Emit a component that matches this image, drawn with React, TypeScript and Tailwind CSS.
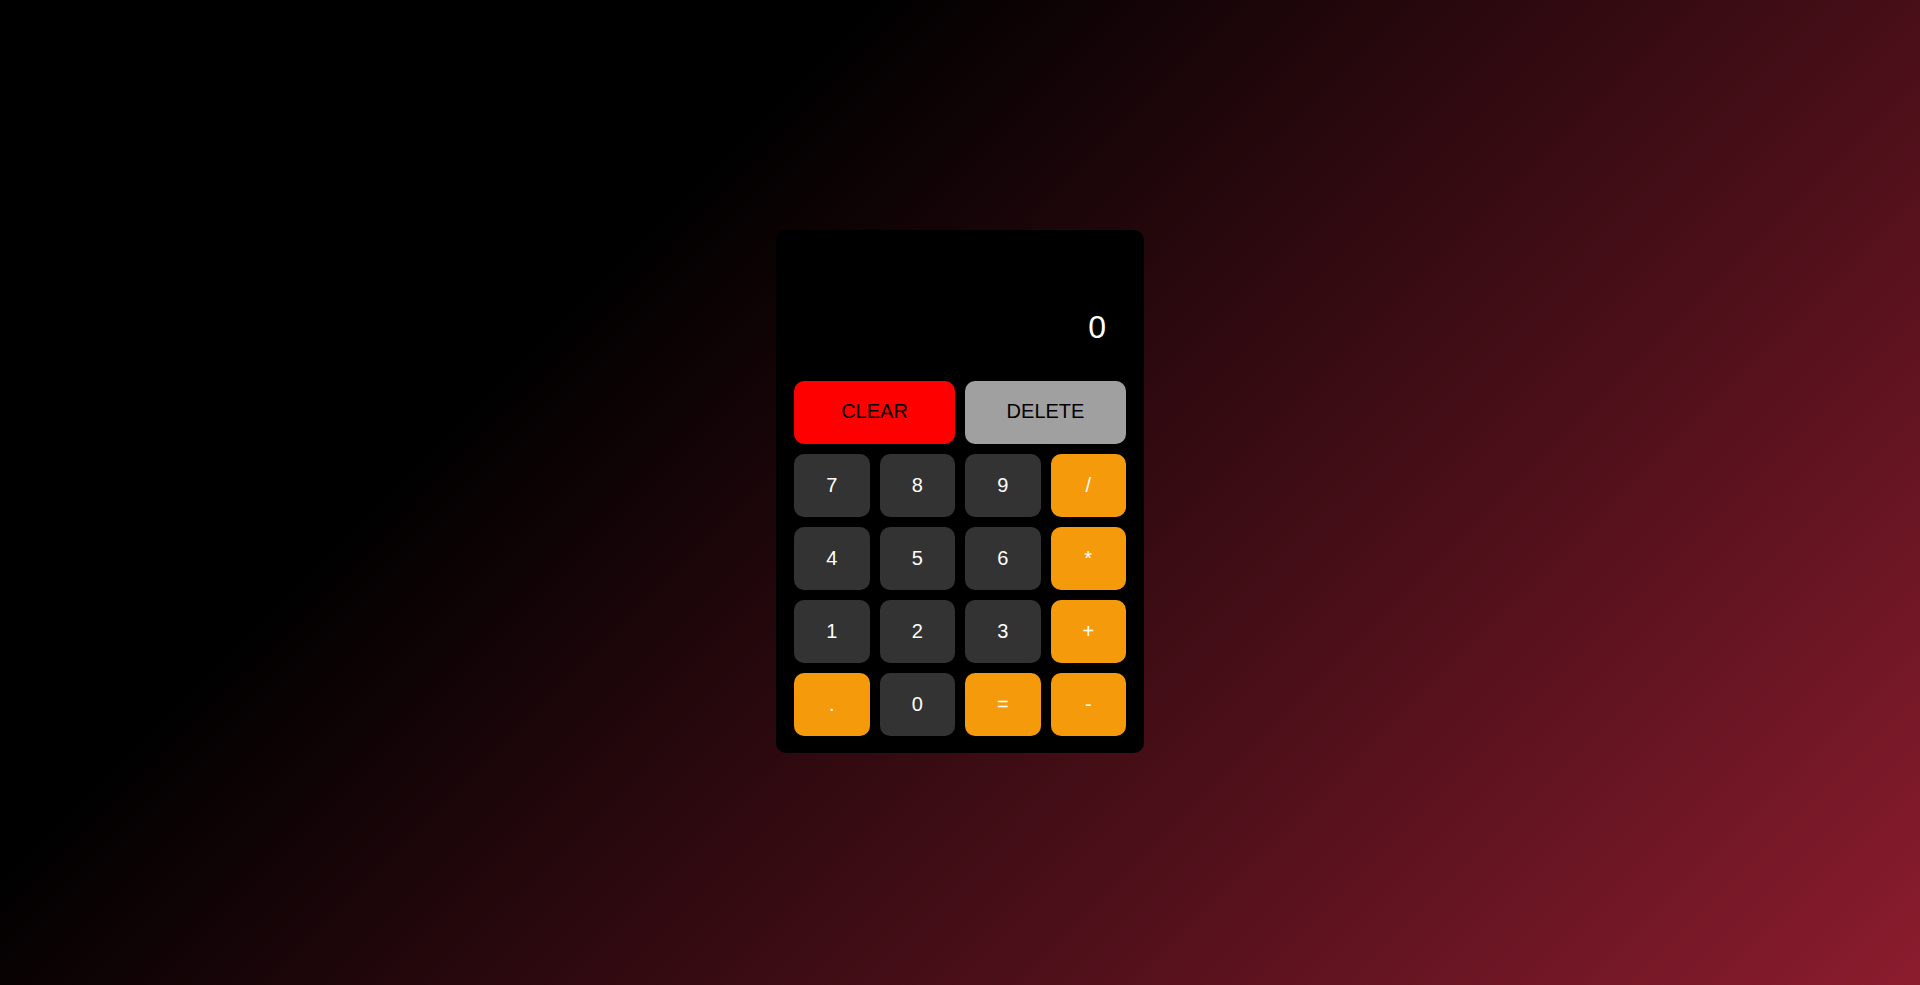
import { useState } from "react"

type Key = {
	label: string
	kind: "num" | "op"
}

const keys: Key[] = [
	{ label: "7", kind: "num" },
	{ label: "8", kind: "num" },
	{ label: "9", kind: "num" },
	{ label: "/", kind: "op" },
	{ label: "4", kind: "num" },
	{ label: "5", kind: "num" },
	{ label: "6", kind: "num" },
	{ label: "*", kind: "op" },
	{ label: "1", kind: "num" },
	{ label: "2", kind: "num" },
	{ label: "3", kind: "num" },
	{ label: "+", kind: "op" },
	{ label: ".", kind: "op" },
	{ label: "0", kind: "num" },
	{ label: "=", kind: "op" },
	{ label: "-", kind: "op" },
]

export default function App() {
	const [value, setValue] = useState("0")

	const press = (k: string) => {
		if (k === "=") {
			try {
				// eslint-disable-next-line no-new-func
				const result = Function(`"use strict";return (${value})`)()
				setValue(String(result))
			} catch {
				setValue("Error")
			}
			return
		}
		setValue((v) => (v === "0" || v === "Error" ? k : v + k))
	}

	return (
		<div className="min-h-screen w-full flex items-center justify-center pb-[2px] bg-[linear-gradient(135deg,#000000_30%,#8b1c2e_100%)] font-['Liberation_Sans',Arial,sans-serif]">
			<div className="w-[368px] bg-black rounded-[10px] px-[18px] pt-[18px] pb-[17px]">
				{/* display */}
				<div className="h-[123px] mb-[10px] flex items-end justify-end pr-5 pb-[20px] text-white text-[32px] leading-normal overflow-hidden">
					{value}
				</div>

				<div className="grid grid-cols-4 auto-rows-[63px] gap-[10px]">
					<button
						className="col-span-2 rounded-[10px] bg-[#ff0000] text-black text-[20px] pb-[3px] cursor-pointer"
						onClick={() => setValue("0")}
					>
						CLEAR
					</button>
					<button
						className="col-span-2 rounded-[10px] bg-[#a0a0a0] text-black text-[20px] pb-[3px] cursor-pointer"
						onClick={() => setValue((v) => (v.length > 1 ? v.slice(0, -1) : "0"))}
					>
						DELETE
					</button>
					{keys.map((k) => (
						<button
							key={k.label}
							className={
								k.kind === "num"
									? "rounded-[10px] bg-[#333333] text-white text-[20px] pb-[2px] cursor-pointer"
									: "rounded-[10px] bg-[#f59a0a] text-white text-[20px] pb-[2px] cursor-pointer"
							}
							onClick={() => press(k.label)}
						>
							{k.label}
						</button>
					))}
				</div>
			</div>
		</div>
	)
}
